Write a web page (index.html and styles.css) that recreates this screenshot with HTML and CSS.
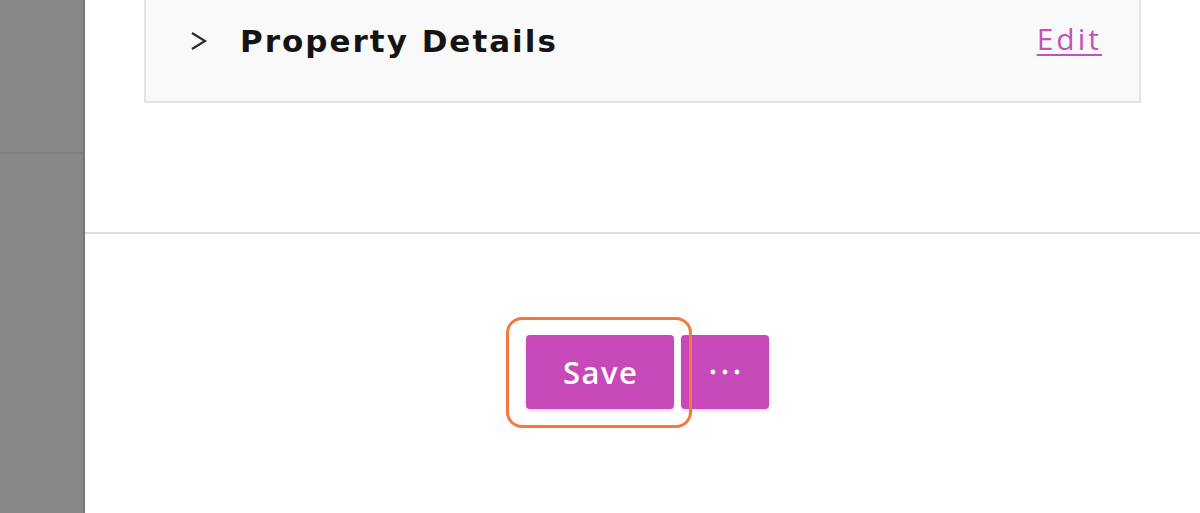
FILE: index.html
```html
<!DOCTYPE html>
<html lang="en">
<head>
<meta charset="utf-8">
<title>Property Details</title>
<link rel="stylesheet" href="styles.css">
</head>
<body>
<div class="screen">
  <aside class="backdrop">
    <div class="backdrop-top"></div>
    <div class="backdrop-bottom"></div>
  </aside>
  <main class="panel">
    <section class="content">
      <div class="card">
        <div class="card-row">
          <svg class="chevron" width="18" height="20" viewBox="0 0 18 20" aria-hidden="true">
            <polyline points="2,2 15,10 2,18" fill="none" stroke="#2b2b2b" stroke-width="2.2" stroke-linejoin="miter"/>
          </svg>
          <h2 class="card-title">Property Details</h2>
          <a class="edit-link" href="#">Edit</a>
        </div>
      </div>
    </section>
    <footer class="footer">
      <div class="actions">
        <button class="btn btn-save" type="button">Save<span class="highlight"></span></button>
        <button class="btn btn-more" type="button" aria-label="More actions">
          <svg width="30" height="6" viewBox="0 0 30 6" aria-hidden="true">
            <circle cx="3" cy="3" r="2.4" fill="#fff"/>
            <circle cx="15" cy="3" r="2.4" fill="#fff"/>
            <circle cx="27" cy="3" r="2.4" fill="#fff"/>
          </svg>
        </button>
      </div>
    </footer>
  </main>
</div>
</body>
</html>
```
FILE: styles.css
```css
html, body {
  margin: 0;
  padding: 0;
  height: 100%;
  overflow: hidden;
  background: #ffffff;
}

.screen {
  display: flex;
  height: 513px;
  width: 1200px;
}

.backdrop {
  width: 83px;
  flex: none;
  display: flex;
  flex-direction: column;
  background: #888888;
  border-right: 2px solid #767676;
}

.backdrop-top {
  height: 152px;
  border-bottom: 2px solid #7e7e7e;
}

.backdrop-bottom {
  flex: 1;
}

.panel {
  flex: 1;
  display: flex;
  flex-direction: column;
  background: #ffffff;
}

.content {
  height: 232px;
  border-bottom: 2px solid #dedede;
}

.card {
  margin: -2px 59px 0 59px;
  background: #f9f9f9;
  border: 2px solid #e3e3e3;
  padding-bottom: 19px;
}

.card-row {
  height: 82px;
  display: flex;
  align-items: center;
  padding: 0 38px 0 44px;
}

.chevron {
  flex: none;
  margin-top: -1px;
}

.card-title {
  margin: 0 0 0 32px;
  flex: 1;
  font-family: "DejaVu Sans", "Open Sans", sans-serif;
  font-weight: 700;
  font-size: 31px;
  color: #141414;
  letter-spacing: 2px;
  line-height: 1;
}

.edit-link {
  font-family: "Open Sans", "DejaVu Sans", sans-serif;
  font-weight: 400;
  font-size: 30px;
  color: #c452bd;
  text-decoration: underline;
  text-decoration-thickness: 2px;
  text-underline-offset: 4px;
  letter-spacing: 3px;
  margin-right: -1px;
  margin-top: -6px;
}

.footer {
  flex: 1;
  display: flex;
  justify-content: center;
  padding: 101px 0 0 10px;
}

.actions {
  display: flex;
  gap: 7px;
  height: 74px;
}

.btn {
  border: none;
  background: #c748b8;
  color: #ffffff;
  border-radius: 4px;
  box-shadow: 0 2px 3px rgba(0, 0, 0, 0.12);
  display: flex;
  align-items: center;
  justify-content: center;
  padding: 0;
  cursor: pointer;
}

.btn-save {
  position: relative;
  width: 148px;
  font-family: "Open Sans", "DejaVu Sans", sans-serif;
  font-weight: 600;
  font-size: 31px;
  letter-spacing: 1.5px;
  text-indent: 1.5px;
}

.btn-more {
  width: 88px;
}

.highlight {
  position: absolute;
  top: -18px;
  left: -20px;
  right: -18px;
  bottom: -19px;
  border: 3px solid #f5783f;
  border-radius: 16px;
  pointer-events: none;
}
```
